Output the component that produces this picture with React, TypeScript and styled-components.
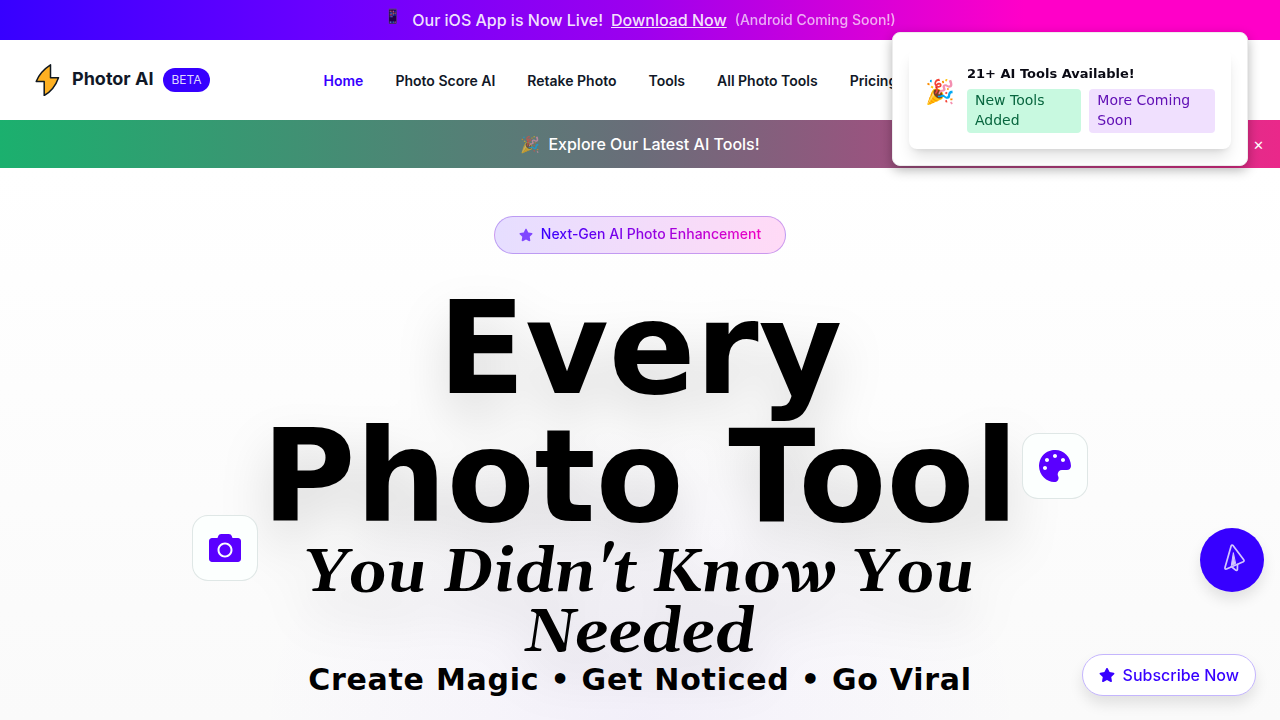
import React from 'react';
import styled, { createGlobalStyle } from 'styled-components';
import { FaCamera, FaPalette, FaStar } from 'react-icons/fa';

const ui = `Inter, 'Liberation Sans', sans-serif`;
const display = `'DejaVu Sans', sans-serif`;

const GlobalStyle = createGlobalStyle`
  *, *::before, *::after { box-sizing: border-box; }
  html, body { margin: 0; }
  body {
    font-family: ${ui};
    font-size: 16px;
    line-height: 24px;
    color: #111827;
    background: #fff;
  }
  a { color: inherit; text-decoration: none; }
  button { font: inherit; border: 0; padding: 0; background: none; cursor: pointer; }
  h1, p { margin: 0; }
`;

const AppBanner = styled.div`
  display: flex;
  justify-content: center;
  align-items: center;
  gap: 8px;
  height: 40px;
  padding: 0 16px;
  background: linear-gradient(to right, #3700ff, #6a00ff 25%, #9d00ee 50%, #ff00c8 80%);
  color: rgba(255, 255, 255, 0.9);
  font-weight: 500;
`;

const PhoneEmoji = styled.span`
  align-self: flex-start;
  padding-top: 4px;
  width: 20px;
  font-size: 14px;
  opacity: 0.8;
`;

const BannerLink = styled.a`
  text-decoration: underline;
`;

const BannerNote = styled.span`
  font-size: 14px;
  opacity: 0.75;
`;

const Header = styled.header`
  display: flex;
  align-items: center;
  height: 80px;
  padding: 0 32px;
  background: #fff;
`;

const Brand = styled.a`
  display: flex;
  align-items: center;
  gap: 8px;
`;

const BrandName = styled.span`
  padding: 0 2px 2px 0;
  font-size: 18px;
  font-weight: 700;
`;

const BetaTag = styled.span`
  padding: 4px 8px;
  border-radius: 12px;
  background: #3700ff;
  color: rgba(255, 255, 255, 0.85);
  font-size: 12px;
  line-height: 16px;
`;

const Nav = styled.nav`
  display: flex;
  gap: 32px;
  margin-left: 114px;
  padding-top: 2px;
  font-size: 14px;
  font-weight: 600;
  white-space: nowrap;
`;

const NavLink = styled.a<{ $active?: boolean }>`
  color: ${(p) => (p.$active ? '#3700ff' : '#111827')};
`;

const Promo = styled.div`
  display: grid;
  grid-template-columns: 1fr auto 1fr;
  align-items: center;
  height: 48px;
  padding: 0 16px;
  background: linear-gradient(to right, #1bb06e, #6a6d79 50%, #ea288a);
  color: #fff;
  font-weight: 500;
`;

const PromoText = styled.p`
  grid-column: 2;
  display: flex;
  gap: 8px;
`;

const Faded = styled.span`
  opacity: 0.6;
`;

const CloseButton = styled.button`
  justify-self: end;
  padding-top: 2px;
  color: #fff;
  font-size: 13px;
`;

const Hero = styled.main`
  position: relative;
  display: flex;
  flex-direction: column;
  align-items: center;
  min-height: calc(100vh - 168px);
  padding: 48px 16px 20px;
  text-align: center;
  background:
    radial-gradient(ellipse 384px 300px at 50% 100%, rgba(120, 60, 255, 0.05), transparent),
    linear-gradient(to bottom, #fff, #fafafa);
`;

const Pill = styled.div`
  display: flex;
  align-items: center;
  gap: 8px;
  height: 38px;
  padding: 0 24px;
  border: 1px solid rgba(85, 0, 220, 0.3);
  border-radius: 19px;
  background: linear-gradient(to right, #e6deff, #ffdaf6);
  color: #8047ff;
  font-size: 14px;
  font-weight: 500;
`;

const PillText = styled.span`
  padding-bottom: 2px;
  background: linear-gradient(to right, #3700ff, #f000c4);
  background-clip: text;
  color: transparent;
`;

const Title = styled.h1`
  margin-top: 31px;
  color: #000;
  font-family: ${display};
  font-weight: 700;
  filter: drop-shadow(0 25px 25px rgba(0, 0, 0, 0.15));
`;

const TitleLine = styled.span`
  display: block;
  font-size: 128px;
  line-height: 128px;
`;

const TitleAccent = styled.span`
  display: block;
  padding-top: 3px;
  font-family: Gelasio, Georgia, 'Liberation Serif', serif;
  font-size: 60px;
  font-style: italic;
  line-height: 60px;
`;

const Tagline = styled.p`
  color: #000;
  font-family: ${display};
  font-size: 30px;
  font-weight: 700;
  line-height: 32px;
  letter-spacing: 0.025em;
`;

const FloatingTile = styled.div<{ $side: 'left' | 'right'; $top: number }>`
  position: absolute;
  top: ${(p) => p.$top}px;
  ${(p) => p.$side}: 15%;
  display: grid;
  place-items: center;
  width: 66px;
  height: 66px;
  border: 1px solid rgba(20, 60, 60, 0.12);
  border-radius: 16px;
  background: #fcfffe;
  color: #5a00ff;
`;

const Toast = styled.aside`
  position: fixed;
  top: 32px;
  right: 32px;
  width: 356px;
  padding: 16px;
  border: 1px solid #ededed;
  border-radius: 8px;
  background: #fff;
  box-shadow: 0 4px 12px rgba(0, 0, 0, 0.3);
  font-family: ${display};
`;

const ToastCard = styled.div`
  display: flex;
  align-items: center;
  gap: 12px;
  padding: 16px;
  border-radius: 8px;
  box-shadow: 0 10px 15px -3px rgba(0, 0, 0, 0.12), 0 4px 6px -4px rgba(0, 0, 0, 0.12);
`;

const ToastEmoji = styled.span`
  width: 30px;
  padding-bottom: 14px;
  font-size: 24px;
  line-height: 32px;
`;

const ToastTitle = styled.p`
  color: #0a0a14;
  font-size: 13px;
  font-weight: 700;
  line-height: 18px;
`;

const ToastTags = styled.div`
  display: flex;
  gap: 8px;
  margin-top: 6px;
`;

const ToastTag = styled.span<{ $tone: 'green' | 'purple' }>`
  padding: 1px 8px 3px;
  border-radius: 4px;
  font-size: 14px;
  line-height: 20px;
  background: ${(p) => (p.$tone === 'green' ? '#c8f9e0' : '#f0e0fe')};
  color: ${(p) => (p.$tone === 'green' ? '#08663f' : '#6110b5')};
`;

const SendButton = styled.button`
  position: fixed;
  right: 16px;
  bottom: 128px;
  display: grid;
  place-items: center;
  width: 64px;
  height: 64px;
  border-radius: 50%;
  background: #3700ff;
  box-shadow: 0 8px 14px rgba(0, 0, 0, 0.1);
`;

const SubscribeButton = styled.button`
  position: fixed;
  right: 24px;
  bottom: 24px;
  display: flex;
  align-items: center;
  gap: 8px;
  height: 42px;
  padding: 0 16px;
  border: 1px solid #c4b5fd;
  border-radius: 21px;
  background: #fff;
  box-shadow: 0 8px 14px rgba(0, 0, 0, 0.1);
  color: #3700ff;
  font-weight: 500;
`;

const navItems = ['Home', 'Photo Score AI', 'Retake Photo', 'Tools', 'All Photo Tools', 'Pricing'];

function BoltLogo() {
  return (
    <svg width="32" height="32" viewBox="0 0 32 32" aria-hidden="true">
      <path
        d="M18.500 .8C12 5 7 10 4.200 17.500h8v14C18.500 28 24 21 26.500 13.800h-8z"
        fill="#fdb022"
        stroke="#101820"
        strokeWidth="1.500"
        strokeLinejoin="round"
      />
    </svg>
  );
}

function SendIcon() {
  return (
    <svg
      width="32"
      height="32"
      viewBox="0 0 32 32"
      fill="none"
      stroke="#d3c6ff"
      strokeWidth="1.700"
      strokeLinejoin="round"
      strokeLinecap="round"
      aria-hidden="true"
    >
      <path d="M15.200 1.800 9 23.500Q8.600 25.500 10.500 25L27.300 17.700Q28.600 17 27.700 15.800L17.200 1.700Q15.900 .3 15.200 1.800Z" />
      <path d="M17.300 9 15.300 21.500 19.300 19.800Z" fill="#d3c6ff" strokeWidth="1" />
      <path d="M15.300 22.500 20 26.300Q21.200 26.600 21.400 25.500L21.500 20.500" />
    </svg>
  );
}

export default function App() {
  return (
    <>
      <GlobalStyle />
      <AppBanner>
        <PhoneEmoji>📱</PhoneEmoji>
        <span>Our iOS App is Now Live!</span>
        <BannerLink href="#download">Download Now</BannerLink>
        <BannerNote>(Android Coming Soon!)</BannerNote>
      </AppBanner>
      <Header>
        <Brand href="#home">
          <BoltLogo />
          <BrandName>Photor AI</BrandName>
          <BetaTag>BETA</BetaTag>
        </Brand>
        <Nav>
          {navItems.map((item, i) => (
            <NavLink key={item} href="#" $active={i === 0}>
              {item}
            </NavLink>
          ))}
        </Nav>
      </Header>
      <Promo>
        <PromoText>
          <Faded>🎉</Faded>
          <span>Explore Our Latest AI Tools!</span>
        </PromoText>
        <CloseButton aria-label="Close">✕</CloseButton>
      </Promo>
      <Hero>
        <Pill>
          <FaStar size={14} />
          <PillText>Next-Gen AI Photo Enhancement</PillText>
        </Pill>
        <Title>
          <TitleLine>Every</TitleLine>
          <TitleLine>Photo Tool</TitleLine>
          <TitleAccent>
            You Didn't Know You
            <br />
            Needed
          </TitleAccent>
        </Title>
        <Tagline>Create Magic • Get Noticed • Go Viral</Tagline>
        <FloatingTile $side="left" $top={347}>
          <FaCamera size={32} />
        </FloatingTile>
        <FloatingTile $side="right" $top={265}>
          <FaPalette size={32} />
        </FloatingTile>
      </Hero>
      <Toast role="status">
        <ToastCard>
          <ToastEmoji>🎉</ToastEmoji>
          <div>
            <ToastTitle>21+ AI Tools Available!</ToastTitle>
            <ToastTags>
              <ToastTag $tone="green">New Tools Added</ToastTag>
              <ToastTag $tone="purple">More Coming Soon</ToastTag>
            </ToastTags>
          </div>
        </ToastCard>
      </Toast>
      <SendButton aria-label="Send feedback">
        <SendIcon />
      </SendButton>
      <SubscribeButton>
        <FaStar size={16} />
        Subscribe Now
      </SubscribeButton>
    </>
  );
}
